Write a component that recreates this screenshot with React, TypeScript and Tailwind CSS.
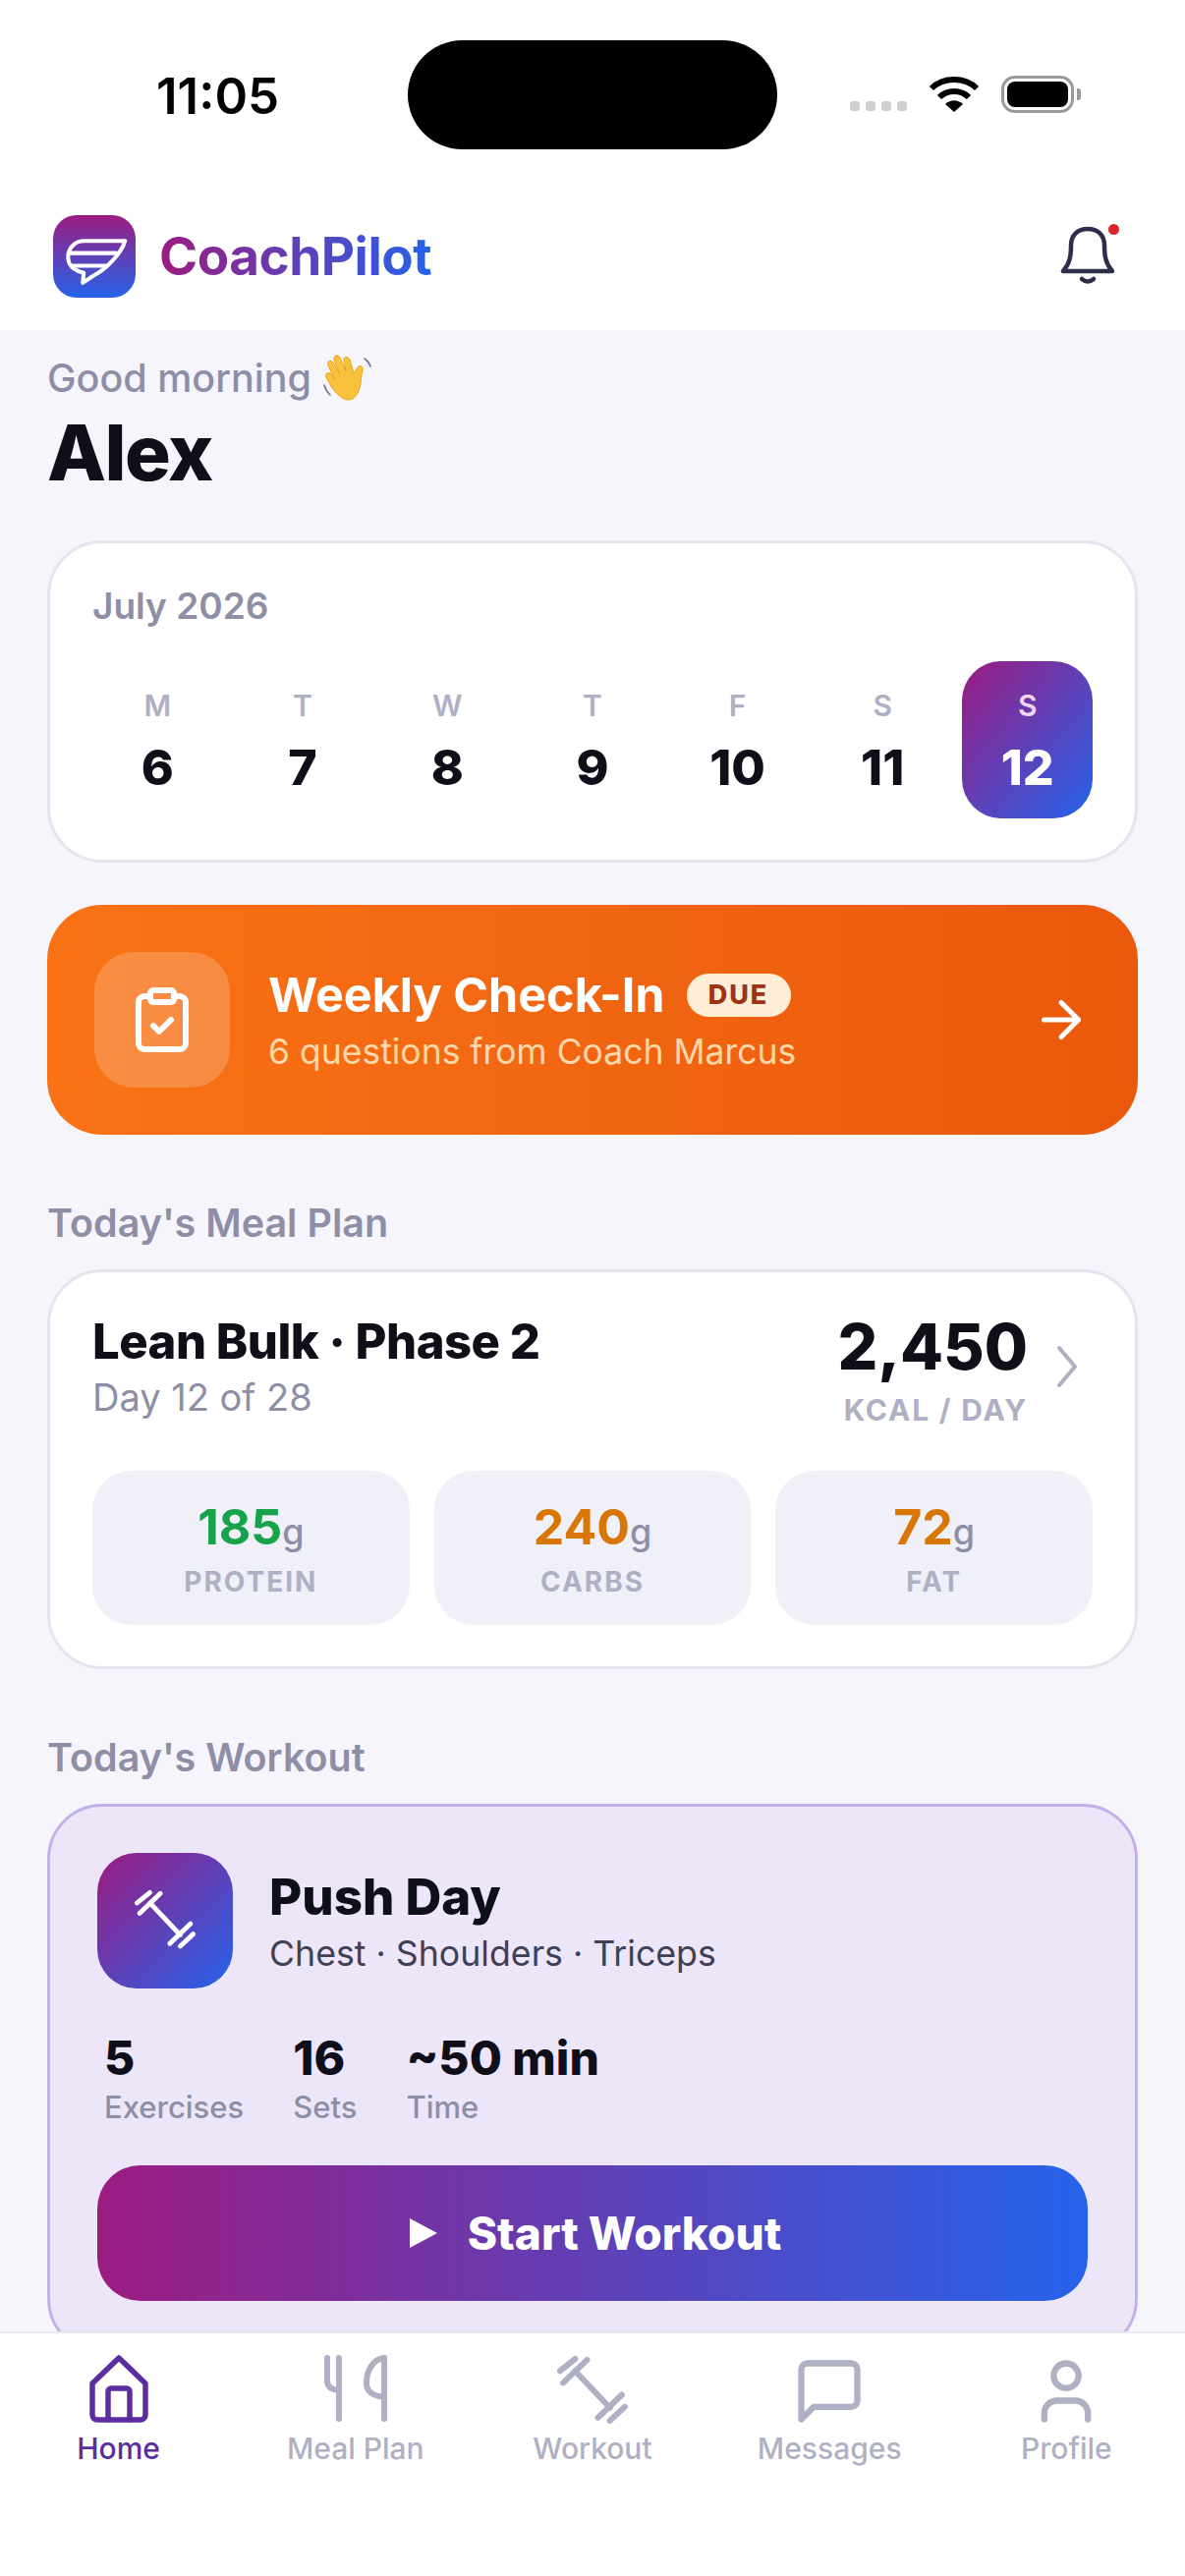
import { ArrowRight, ClipboardCheck, User } from "lucide-react";

const days = [
  { label: "M", num: "6" },
  { label: "T", num: "7" },
  { label: "W", num: "8" },
  { label: "T", num: "9" },
  { label: "F", num: "10" },
  { label: "S", num: "11" },
  { label: "S", num: "12", today: true },
];

const macros = [
  { value: "185", label: "PROTEIN", color: "text-[#16a34a]" },
  { value: "240", label: "CARBS", color: "text-[#d97706]" },
  { value: "72", label: "FAT", color: "text-[#d97706]" },
];

const stats = [
  { value: "5", label: "Exercises" },
  { value: "16", label: "Sets" },
  { value: "~50 min", label: "Time" },
];

function Dumbbell({ size, width }: { size: number; width: number }) {
  return (
    <svg width={size} height={size} viewBox="0 0 75 75" fill="none" stroke="currentColor" strokeWidth={width} strokeLinecap="round">
      <path d="M20 17 55 54" />
      <path d="M8 29 32 6" />
      <path d="M43 64 67 41" />
      <path d="M5 17 20 5" />
      <path d="M55 67 70 53" />
    </svg>
  );
}

function HomeIcon() {
  return (
    <svg width="76" height="76" viewBox="0 0 76 76" fill="none" stroke="currentColor" strokeWidth="5.5" strokeLinecap="round" strokeLinejoin="round">
      <path d="M38 4 11 30V62a5 5 0 0 0 5 5H60a5 5 0 0 0 5-5V30Z" />
      <path d="M27 67V38a3 3 0 0 1 3-3H46a3 3 0 0 1 3 3V67" />
    </svg>
  );
}

function MealIcon() {
  return (
    <svg width="70" height="76" viewBox="0 0 70 76" fill="none" stroke="currentColor" strokeWidth="6" strokeLinecap="round" strokeLinejoin="round">
      <path d="M6 4V27Q6 36 18 37" />
      <path d="M18 4V66" />
      <path d="M64 4V66" />
      <path d="M64 4C52 5 46 18 46 30C46 38 53 43 64 44" />
    </svg>
  );
}

function MessageIcon() {
  return (
    <svg width="76" height="76" viewBox="0 0 24 24" fill="none" stroke="currentColor" strokeWidth="2" strokeLinecap="round" strokeLinejoin="round">
      <path d="M21 15a2 2 0 0 1-2 2H7l-4 4V5a2 2 0 0 1 2-2h14a2 2 0 0 1 2 2z" />
    </svg>
  );
}

function WaveHand() {
  return (
    <svg width="54" height="50" viewBox="0 0 54 50" className="ml-[10px] -my-[1px]">
      <path d="M20 44C12 38 8 30 5 24C3 20 8 18 10 21L14 27L7 12C5 8 10 5 12 9L19 21L13 6C12 2 17 0 19 4L25 18L23 7C22 3 27 2 29 6L33 20L37 14C39 11 43 13 42 17C40 24 41 32 37 40C33 48 26 49 20 44Z" fill="#f8c23c" stroke="#e9a320" strokeWidth="1" />
      <path d="M3 32C4 36 6 39 9 42M44 5C47 7 49 10 50 13" fill="none" stroke="#77778a" strokeWidth="1.6" strokeLinecap="round" />
    </svg>
  );
}

function NavItem({ label, icon, active }: { label: string; icon: React.ReactNode; active?: boolean }) {
  return (
    <div className={`flex flex-col items-center ${active ? "text-[#5b2d9e]" : "text-[#b0b0c4]"}`}>
      <div className="h-[76px] w-[76px] flex items-center justify-center">{icon}</div>
      <span className="text-[30px] leading-[40px] font-medium">{label}</span>
    </div>
  );
}

export default function App() {
  return (
    <div className="w-[1206px] h-[2622px] overflow-hidden flex flex-col bg-[#f5f5fb] text-[#0f0f1a] font-['Inter',sans-serif]">
      {/* Status bar + header */}
      <div className="bg-white shrink-0">
        <div className="pt-[41px] h-[152px] flex items-center">
          <span className="ml-[159px] mt-[2px] w-[256px] text-[51px] leading-none font-semibold text-black">11:05</span>
          <div className="w-[376px] h-[111px] rounded-[56px] bg-black" />
          <div className="ml-[74px] mt-[22px] flex gap-[6px]">
            <div className="w-[10px] h-[10px] rounded-[3px] bg-[#cfcfcf]" />
            <div className="w-[10px] h-[10px] rounded-[3px] bg-[#cfcfcf]" />
            <div className="w-[10px] h-[10px] rounded-[3px] bg-[#cfcfcf]" />
            <div className="w-[10px] h-[10px] rounded-[3px] bg-[#cfcfcf]" />
          </div>
          <svg width="52" height="38" viewBox="0 0 52 38" fill="none" stroke="black" strokeWidth="6" className="ml-[22px] -mt-[1px]">
            <path d="M3 13C15 1 37 1 49 13" />
            <path d="M11 22C19 14 33 14 41 22" />
            <path d="M17 29 26 37 35 29C29 24 23 24 17 29Z" fill="black" stroke="none" />
          </svg>
          <div className="ml-[22px] -mt-[1px] w-[74px] h-[38px] rounded-[14px] border-[3px] border-[#999] p-[3px]">
            <div className="w-full h-full rounded-[8px] bg-black" />
          </div>
          <div className="ml-[3px] -mt-[1px] w-[4px] h-[12px] rounded-r-[3px] bg-[#999]" />
        </div>
        <div className="mt-[67px] mb-[33px] pl-[54px] pr-[71px] h-[84px] flex items-center justify-between">
          <div className="flex items-center gap-[24px]">
            <div className="w-[84px] h-[84px] rounded-[24px] bg-linear-to-b/srgb from-[#9b1c80] to-[#2563eb] flex items-center justify-center">
              <svg width="84" height="84" viewBox="72 57 250 250" fill="none" stroke="white" strokeWidth="12" strokeLinejoin="round" strokeLinecap="round">
                <path d="M290 135H165C132 135 115 165 118 190C120 215 145 228 165 232L162 262L195 240C232 222 280 172 290 135Z" />
                <path d="M122 172H264" />
                <path d="M128 210H232" />
              </svg>
            </div>
            <span className="text-[53px] leading-[64px] font-bold tracking-[-0.5px] bg-linear-to-r/srgb from-[#9b1c80] to-[#2563eb] bg-clip-text text-transparent">
              CoachPilot
            </span>
          </div>
          <div className="relative w-[56px] h-[62px]">
            <svg width="56" height="62" viewBox="0 0 56 62" fill="none" stroke="#2e2e4a" strokeWidth="4.5" strokeLinecap="round" strokeLinejoin="round">
              <path d="M3 46H53C46 38 45 30 45 20C45 9 38 3 28 3C18 3 11 9 11 20C11 30 10 38 3 46Z" />
              <path d="M22 54Q28 59 34 54" />
            </svg>
            <div className="absolute -top-[7px] -right-[8px] w-[20px] h-[20px] rounded-full bg-white flex items-center justify-center">
              <div className="w-[11px] h-[11px] rounded-full bg-[#dc2626]" />
            </div>
          </div>
        </div>
      </div>

      {/* Scroll area */}
      <main className="flex-1 min-h-0 overflow-hidden px-[48px] pt-[25px]">
        <div className="flex items-center text-[39.5px] leading-[48px] font-medium text-[#8e8ea6]">
          Good morning
          <WaveHand />
        </div>
        <h1 className="mt-[10px] text-[78px] leading-[84px] font-extrabold tracking-[-1.5px]">Alex</h1>

        {/* Calendar */}
        <section className="mt-[47px] h-[328px] rounded-[56px] border-[3px] border-[#e5e5f0] bg-white px-[43px] pt-[41px]">
          <p className="text-[37px] leading-[46px] font-semibold text-[#8e8ea6]">July 2026</p>
          <div className="mt-[33px] grid grid-cols-7 gap-[15px]">
            {days.map((d) => (
              <div
                key={d.num}
                className={`h-[160px] rounded-[40px] flex flex-col items-center justify-center gap-[15px] ${
                  d.today ? "bg-linear-to-br/srgb from-[#9b1c80] to-[#2563eb]" : ""
                }`}
              >
                <span className={`text-[30px] leading-[40px] font-semibold ${d.today ? "text-[#eed5f0]" : "text-[#b0b0c4]"}`}>{d.label}</span>
                <span className={`text-[50px] leading-[56px] font-extrabold ${d.today ? "text-white" : ""}`}>{d.num}</span>
              </div>
            ))}
          </div>
        </section>

        {/* Check-in */}
        <section className="mt-[43px] h-[234px] rounded-[56px] bg-linear-to-r/srgb from-[#f97316] to-[#ea580c] pl-[48px] pr-[48px] flex items-center">
          <div className="w-[138px] h-[138px] rounded-[40px] bg-white/20 flex items-center justify-center text-white">
            <ClipboardCheck size={72} strokeWidth={2} />
          </div>
          <div className="ml-[39px] flex-1">
            <div className="flex items-center">
              <span className="text-[48.5px] leading-[60px] font-bold text-white">Weekly Check-In</span>
              <span className="ml-[22px] h-[44px] w-[106px] rounded-full bg-[#ffedd5] text-[#9a3412] text-[27px] leading-[44px] font-extrabold tracking-[2px] text-center">
                DUE
              </span>
            </div>
            <p className="mt-[5px] text-[35.5px] leading-[46px] text-[#fed7aa]">6 questions from Coach Marcus</p>
          </div>
          <ArrowRight size={60} strokeWidth={2} className="text-white" />
        </section>

        {/* Meal plan */}
        <h2 className="mt-[67px] text-[39.5px] leading-[46px] font-semibold text-[#8e8ea6]">Today's Meal Plan</h2>
        <section className="mt-[24px] h-[407px] rounded-[56px] border-[3px] border-[#e5e5f0] bg-white px-[43px] pt-[38px]">
          <div className="flex justify-between">
            <div className="pt-[3px]">
              <p className="text-[49px] leading-[60px] font-extrabold tracking-[-0.5px]">Lean Bulk · Phase 2</p>
              <p className="mt-[3px] text-[38px] leading-[46px] text-[#8e8ea6]">Day 12 of 28</p>
            </div>
            <div className="flex items-center mr-[14px]">
              <div className="text-right">
                <p className="text-[64px] leading-[76px] font-extrabold">2,450</p>
                <p className="mt-[8px] text-[30px] leading-[36px] font-bold tracking-[1.8px] text-[#b0b0c4]">KCAL / DAY</p>
              </div>
              <svg width="24" height="44" viewBox="0 0 24 44" fill="none" stroke="#b0b0c4" strokeWidth="4" strokeLinecap="round" strokeLinejoin="round" className="ml-[28px] -mt-[4px]">
                <path d="M4 3 20 22 4 41" />
              </svg>
            </div>
          </div>
          <div className="mt-[44px] grid grid-cols-3 gap-[25px]">
            {macros.map((m) => (
              <div key={m.label} className="h-[157px] rounded-[40px] bg-[#f0f0f8] flex flex-col items-center justify-center">
                <p className="text-[50px] leading-[60px] font-bold">
                  <span className={m.color}>{m.value}</span>
                  <span className="text-[36px] font-medium text-[#8e8ea6]">g</span>
                </p>
                <p className="mt-[3px] text-[28px] leading-[36px] font-bold tracking-[2px] text-[#b0b0c4]">{m.label}</p>
              </div>
            ))}
          </div>
        </section>

        {/* Workout */}
        <h2 className="mt-[67px] text-[39.5px] leading-[46px] font-semibold text-[#8e8ea6]">Today's Workout</h2>
        <section className="mt-[24px] h-[560px] rounded-[56px] border-[3px] border-[#c4b0ea] bg-[#ece6f8] px-[48px] pt-[47px]">
          <div className="flex items-center gap-[37px]">
            <div className="w-[138px] h-[138px] rounded-[40px] bg-linear-to-br/srgb from-[#9b1c80] to-[#2563eb] flex items-center justify-center text-white">
              <Dumbbell size={66} width={5.5} />
            </div>
            <div>
              <p className="text-[51px] leading-[62px] font-extrabold">Push Day</p>
              <p className="mt-[3px] text-[35.7px] leading-[46px] text-[#3f3f56]">Chest · Shoulders · Triceps</p>
            </div>
          </div>
          <div className="mt-[43px] pl-[7px] flex gap-[50px]">
            {stats.map((s) => (
              <div key={s.label}>
                <p className="text-[48px] leading-[56px] font-extrabold">{s.value}</p>
                <p className="mt-[2px] text-[31px] leading-[40px] font-medium text-[#8e8ea6]">{s.label}</p>
              </div>
            ))}
          </div>
          <button className="mt-[39px] w-full h-[138px] rounded-[44px] bg-linear-to-r/srgb from-[#9b1c80] to-[#2563eb] flex items-center justify-center gap-[31px] pl-[6px] text-white">
            <svg width="28" height="30" viewBox="0 0 28 30" fill="white">
              <path d="M0 0 28 15 0 30Z" />
            </svg>
            <span className="text-[46px] leading-[56px] font-extrabold">Start Workout</span>
          </button>
        </section>
      </main>

      {/* Bottom nav */}
      <nav className="shrink-0 h-[249px] border-t-[2px] border-[#e8e8f3] bg-white pt-[21px] grid grid-cols-5 content-start">
        <NavItem label="Home" active icon={<HomeIcon />} />
        <NavItem label="Meal Plan" icon={<MealIcon />} />
        <NavItem label="Workout" icon={<Dumbbell size={76} width={6} />} />
        <NavItem label="Messages" icon={<MessageIcon />} />
        <NavItem label="Profile" icon={<User size={76} strokeWidth={2} />} />
      </nav>
    </div>
  );
}
